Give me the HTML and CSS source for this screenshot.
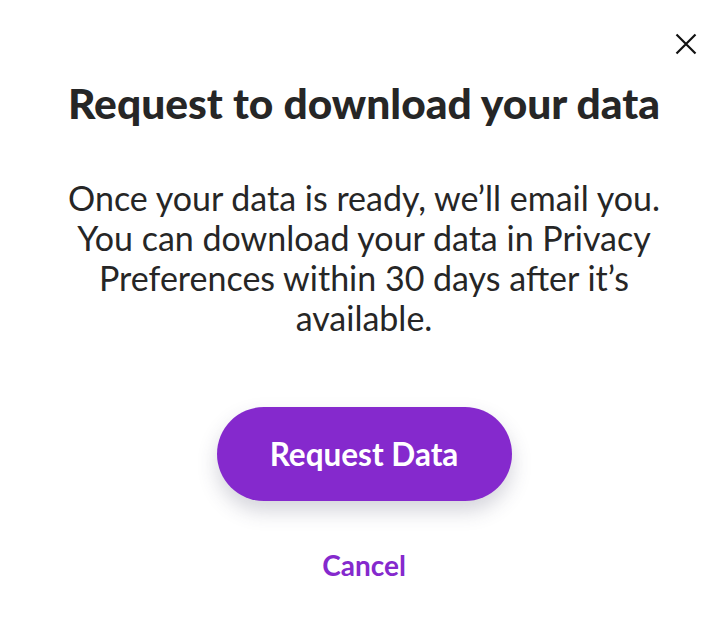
FILE: index.html
```html
<!DOCTYPE html>
<html>
<head>
<meta charset="utf-8">
<link rel="stylesheet" href="styles.css">
</head>
<body>
<div class="modal">
  <div class="top">
    <button class="close" aria-label="Close">
      <svg width="22" height="22" viewBox="0 0 22 22"><path d="M1.5 1.5L20.5 20.5M20.5 1.5L1.5 20.5" stroke="#111" stroke-width="2.2" fill="none"/></svg>
    </button>
  </div>
  <h1 class="title">Request to download your data</h1>
  <p class="desc">Once your data is ready, we’ll email you. You can download your data in Privacy Preferences within 30 days after it’s available.</p>
  <button class="primary">Request Data</button>
  <button class="cancel">Cancel</button>
</div>
</body>
</html>
```
FILE: styles.css
```css
html, body { margin: 0; padding: 0; background: #fff; }
body { font-family: Lato, "Noto Sans", sans-serif; color: #262626; }
.modal { display: flex; flex-direction: column; align-items: center; width: 728px; }
.top { align-self: stretch; display: flex; justify-content: flex-end; padding: 33px 31px 0 0; height: 22px; }
.close { border: 0; background: none; padding: 0; width: 22px; height: 22px; cursor: pointer; }
.title { margin: 23px 0 0; font-size: 42.5px; font-weight: 900; line-height: 50px; text-align: center; white-space: nowrap; }
.desc { margin: 50px 0 0; width: 610px; font-size: 34px; line-height: 40px; text-align: center; }
.primary { margin-top: 69px; width: 295px; height: 94px; border: 0; border-radius: 47px; background: #8529cd; color: #fff; font-family: inherit; font-size: 31.5px; font-weight: 700; box-shadow: 0 10px 20px rgba(60,60,90,0.22); }
.cancel { margin-top: 47px; border: 0; background: none; color: #8529cd; font-family: inherit; font-size: 28px; line-height: 34px; font-weight: 700; padding: 0; }
```
